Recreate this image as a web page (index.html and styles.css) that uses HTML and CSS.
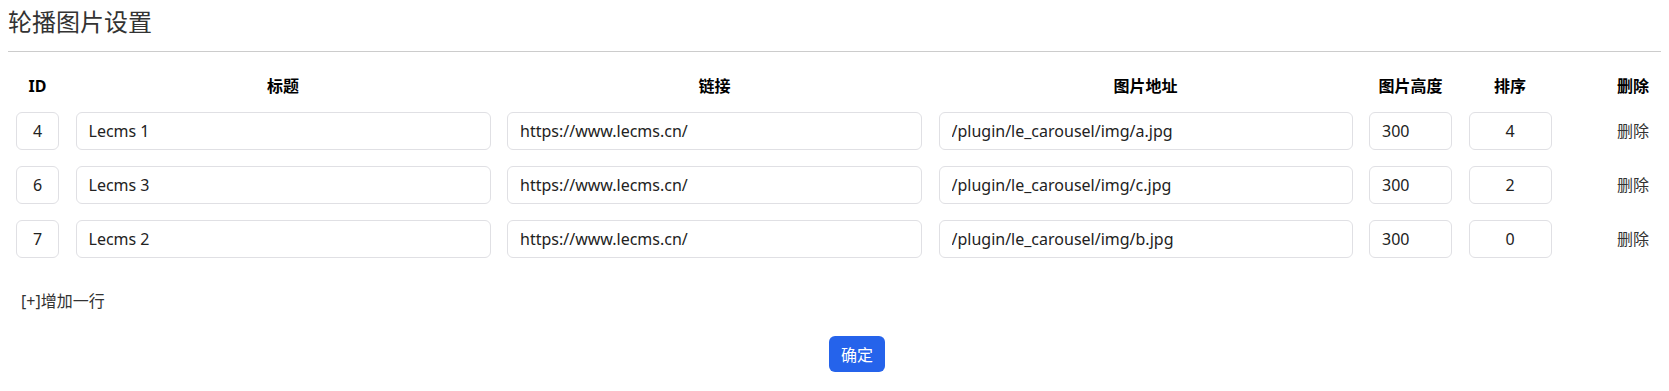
FILE: index.html
```html
<!DOCTYPE html>
<html lang="zh-CN">
<head>
<meta charset="utf-8">
<title>轮播图片设置</title>
<link rel="stylesheet" href="styles.css">
</head>
<body>
<div class="page-head">
  <h1 class="page-title">轮播图片设置</h1>
</div>
<form class="carousel-form">
  <div class="grid">
    <div class="th">ID</div>
    <div class="th">标题</div>
    <div class="th">链接</div>
    <div class="th">图片地址</div>
    <div class="th">图片高度</div>
    <div class="th">排序</div>
    <div class="th th-del">删除</div>

    <div class="td"><input class="inp center" value="4"></div>
    <div class="td"><input class="inp" value="Lecms 1"></div>
    <div class="td"><input class="inp" value="https://www.lecms.cn/"></div>
    <div class="td"><input class="inp" value="/plugin/le_carousel/img/a.jpg"></div>
    <div class="td"><input class="inp" value="300"></div>
    <div class="td"><input class="inp center" value="4"></div>
    <div class="td td-del"><a class="del" href="#">删除</a></div>

    <div class="td"><input class="inp center" value="6"></div>
    <div class="td"><input class="inp" value="Lecms 3"></div>
    <div class="td"><input class="inp" value="https://www.lecms.cn/"></div>
    <div class="td"><input class="inp" value="/plugin/le_carousel/img/c.jpg"></div>
    <div class="td"><input class="inp" value="300"></div>
    <div class="td"><input class="inp center" value="2"></div>
    <div class="td td-del"><a class="del" href="#">删除</a></div>

    <div class="td"><input class="inp center" value="7"></div>
    <div class="td"><input class="inp" value="Lecms 2"></div>
    <div class="td"><input class="inp" value="https://www.lecms.cn/"></div>
    <div class="td"><input class="inp" value="/plugin/le_carousel/img/b.jpg"></div>
    <div class="td"><input class="inp" value="300"></div>
    <div class="td"><input class="inp center" value="0"></div>
    <div class="td td-del"><a class="del" href="#">删除</a></div>
  </div>
  <div class="add-row"><a class="add" href="#">[+]增加一行</a></div>
  <div class="actions"><button type="button" class="btn">确定</button></div>
</form>
</body>
</html>
```
FILE: styles.css
```css
* { box-sizing: border-box; }
html, body { background: #fff; }
body {
  margin: 8px;
  font-family: "Noto Sans", "Noto Sans CJK SC", sans-serif;
  font-size: 16px;
  color: #333;
}
.page-head {
  border-bottom: 1px solid #cccccc;
  padding-bottom: 15px;
}
.page-title {
  margin: 0;
  font-size: 24px;
  line-height: 28px;
  font-weight: normal;
  color: #333;
}
.carousel-form {
  padding: 16px 0 0 8px;
}
.grid {
  display: grid;
  grid-template-columns: 43px 415px 415px 414px 83px 83px 1fr;
  column-gap: 16.5px;
}
.th {
  height: 36px;
  line-height: 36px;
  text-align: center;
  font-weight: bold;
  color: #000;
}
.td {
  padding: 8px 0;
  height: 54px;
}
.th-del, .td-del { text-align: right; padding-right: 12px; }
.td-del { line-height: 38px; }
.inp {
  display: block;
  width: 100%;
  height: 38px;
  border: 1px solid #e0e0e4;
  border-radius: 6px;
  padding: 0 12px;
  font-family: inherit;
  font-size: 16px;
  color: #222;
  background: #fff;
  outline: none;
}
.inp.center { text-align: center; padding: 0 4px; }
.del, .add { color: #333; text-decoration: none; }
.add-row {
  margin-top: 23px;
  padding-left: 5px;
  line-height: 24px;
}
.actions {
  margin-top: 23px;
  padding-left: 813px;
}
.btn {
  height: 36px;
  padding: 0 12px;
  border: none;
  border-radius: 6px;
  background: #2563eb;
  color: #fff;
  font-family: inherit;
  font-size: 16px;
  cursor: pointer;
}
```
